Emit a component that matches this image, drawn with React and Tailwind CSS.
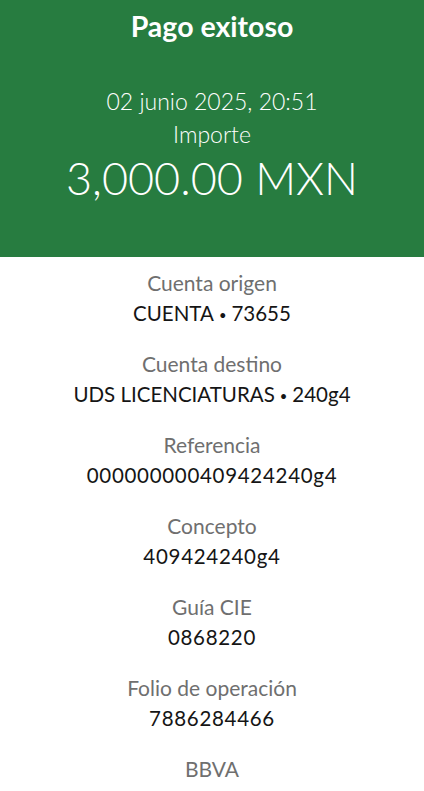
import React from 'react';

const Dot = () => <span className="mx-[5px] text-[13px] relative -top-[1px]">•</span>;

const rows = [
  { label: 'Cuenta origen', value: <>CUENTA<Dot />73655</> },
  { label: 'Cuenta destino', value: <>UDS LICENCIATURAS<Dot />240g4</> },
  { label: 'Referencia', value: '000000000409424240g4', digits: true },
  { label: 'Concepto', value: '409424240g4', digits: true },
  { label: 'Guía CIE', value: '0868220', digits: true },
  { label: 'Folio de operación', value: '7886284466', digits: true },
];

export default function App() {
  return (
    <div className="min-h-[791px] bg-white font-['Lato',sans-serif] text-center">
      {/* Header */}
      <div className="h-[257px] bg-[#277c40] text-white flex flex-col items-center">
        <h1 className="mt-[7px] text-[28.5px] leading-[38px] font-bold">Pago exitoso</h1>
        <p className="mt-[40px] text-[23px] leading-[32px] font-light">02 junio 2025, 20:51</p>
        <p className="text-[23px] leading-[34px] font-light">Importe</p>
        <p className="mt-[1px] text-[45px] leading-[52px] font-light">3,000.00 MXN</p>
      </div>

      {/* Details */}
      <div className="flex flex-col items-center pt-[12px]">
        {rows.map(r => (
          <div key={r.label} className="h-[81px] flex flex-col items-center">
            <p className="text-[21px] leading-[28px] text-[#6f6f6f]">{r.label}</p>
            <p className={`mt-[2px] text-[20.5px] leading-[28px] text-[#151515] ${r.digits ? 'tracking-[0.7px]' : ''}`}>{r.value}</p>
          </div>
        ))}
        <p className="text-[21px] leading-[28px] text-[#6f6f6f]">BBVA</p>
      </div>
    </div>
  );
}
